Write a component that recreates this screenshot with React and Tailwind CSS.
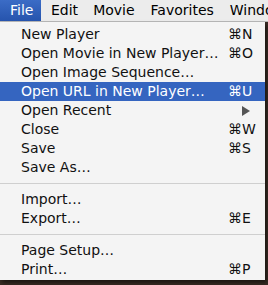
import React from "react";

const font = { fontFamily: '"Lucida Grande", "DejaVu Sans", sans-serif' };

const items = [
  { label: "New Player", key: "⌘N" },
  { label: "Open Movie in New Player…", key: "⌘O" },
  { label: "Open Image Sequence…" },
  { label: "Open URL in New Player…", key: "⌘U", active: true },
  { label: "Open Recent", arrow: true },
  { label: "Close", key: "⌘W" },
  { label: "Save", key: "⌘S" },
  { label: "Save As…" },
  { sep: true },
  { label: "Import…" },
  { label: "Export…", key: "⌘E" },
  { sep: true },
  { label: "Page Setup…" },
  { label: "Print…", key: "⌘P" },
];

export default function App() {
  return (
    <div className="w-[268px] h-[285px] overflow-hidden bg-[#3a2c24] relative" style={font}>
      <div className="h-[22px] flex items-stretch bg-[#ececec] border-b border-[#b9b9b9] text-[14px] text-black overflow-hidden">
        <div className="shrink-0 w-[41px] pl-[10px] flex items-center bg-gradient-to-b from-[#3b6cc6] to-[#2654ad] text-white">File</div>
        <div className="shrink-0 pl-[10px] flex items-center">Edit</div>
        <div className="shrink-0 pl-[15px] flex items-center">Movie</div>
        <div className="shrink-0 pl-[16px] flex items-center">Favorites</div>
        <div className="shrink-0 pl-[16px] flex items-center whitespace-nowrap">Window</div>
      </div>
      <div className="w-[265px] h-[258px] pt-[3px] bg-[#f4f4f4] shadow-[2px_3px_4px_rgba(0,0,0,0.5)] text-[14px] text-[#111]">
        {items.map((it, i) =>
          it.sep ? (
            <div key={i} className="h-[13px] flex items-center">
              <div className="h-px w-full bg-[#cfcfcf]" />
            </div>
          ) : (
            <div
              key={i}
              className={
                "h-[19px] flex items-center pl-[21px] whitespace-nowrap " +
                (it.active ? "bg-[#3565c0] text-white" : "")
              }
            >
              <span className="flex-1">{it.label}</span>
              {it.key && <span className="w-[37px]">{it.key}</span>}
              {it.arrow && (
                <span className="w-[37px] flex justify-start pl-[14px]">
                  <svg width="8" height="10" viewBox="0 0 8 10">
                    <path d="M0 0 L8 5 L0 10 Z" fill="#555" />
                  </svg>
                </span>
              )}
            </div>
          )
        )}
      </div>
    </div>
  );
}
